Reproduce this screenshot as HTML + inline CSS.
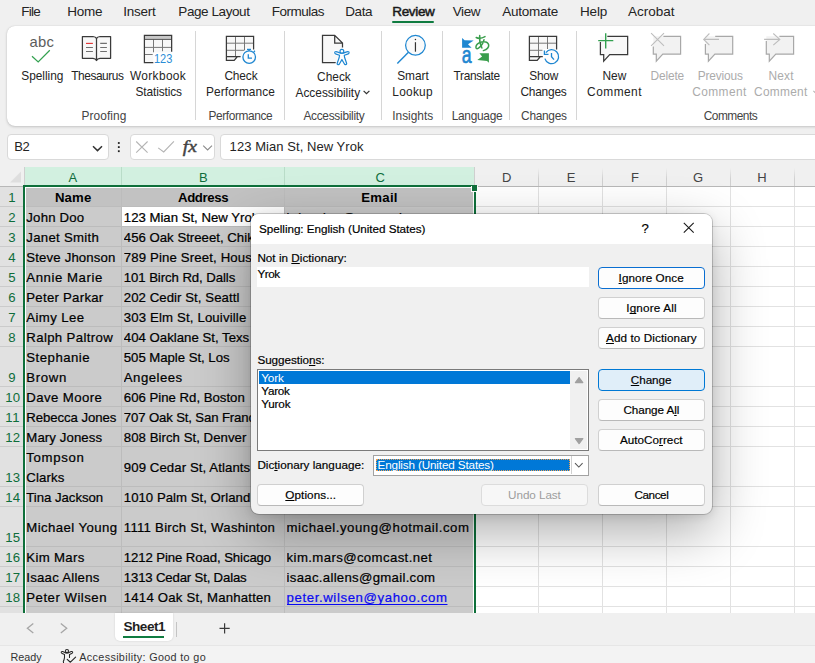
<!DOCTYPE html>
<html><head><meta charset="utf-8"><title>Excel</title>
<style>
*{box-sizing:border-box;margin:0;padding:0}
html,body{width:815px;height:663px;overflow:hidden;background:#f0f0f0;font-family:"Liberation Sans",sans-serif;}
body{position:relative}
.a{position:absolute}
.t{position:absolute;white-space:nowrap;line-height:20px;height:20px}
.t u{text-decoration:underline;text-decoration-thickness:1px;text-underline-offset:1px;text-decoration-skip-ink:none}
svg{position:absolute;overflow:visible}
.sep{position:absolute;width:1px;top:31px;height:89px;background:#d6d6d6}
.btn{position:absolute;height:22px;border:1px solid #d0d0d0;border-bottom-color:#b9b9b9;border-radius:4px;background:#fdfdfd}
</style></head><body>
<!-- tab bar -->
<div class="a" style="left:0;top:0;width:815px;height:26px;background:#f0f0f0"></div>
<div class="a" style="left:392px;top:20.5px;width:42px;height:2.5px;background:#107c41;border-radius:1px"></div>
<!-- ribbon -->
<div class="a" style="left:7px;top:26px;width:830px;height:99.6px;background:#fff;border-radius:8px;box-shadow:0 1px 3px rgba(0,0,0,.18),0 0 1px rgba(0,0,0,.18)"></div>
<div class="sep" style="left:195px"></div><div class="sep" style="left:284px"></div><div class="sep" style="left:381px"></div>
<div class="sep" style="left:442px"></div><div class="sep" style="left:509px"></div><div class="sep" style="left:576px"></div>
<!--ICONS-->
<svg style="left:0;top:0" width="815" height="130" viewBox="0 0 815 130">
<!-- spelling check -->
<path d="M32 56.2L38.2 62L49.8 50.3" stroke="#33a150" stroke-width="1.25" fill="none"/>
<!-- thesaurus -->
<path d="M82.4 36.5H93Q95.6 36.7 96.5 38.6Q97.4 36.7 100 36.5H110.6V58.3H100Q97.4 58.5 96.5 60.5Q95.6 58.5 93 58.3H82.4Z" stroke="#3a3a3a" stroke-width="1.25" fill="#f8f8f8" stroke-linejoin="round"/>
<path d="M96.5 38.4V60.4" stroke="#3a3a3a" stroke-width="1.25"/>
<path d="M86 43.4H92.9" stroke="#e23a3a" stroke-width="1.15"/>
<path d="M86 47.5H92.9M86 51.5H92.9M100.2 43.4H106.9M100.2 47.5H106.9M100.2 51.5H106.9" stroke="#707070" stroke-width="1.15"/>
<!-- workbook stats -->
<rect x="144.4" y="35.4" width="27.2" height="27" fill="#f8f8f8"/>
<rect x="144.4" y="35.4" width="27.2" height="3.9" fill="#c8c8c8"/>
<path d="M153.5 39.3V52.5M162.5 39.3V51.2M145 47.4H171M145 54.5H152.7" stroke="#787878" stroke-width="1" fill="none"/>
<path d="M145 39.4H171" stroke="#555" stroke-width="1" fill="none"/>
<path d="M171.65 51.7V35.4H144.4V62.5H154.3" stroke="#3a3a3a" stroke-width="1.25" fill="none"/>
<rect x="153.3" y="52.4" width="20" height="11.5" fill="#fff"/>
<text x="153.9" y="62.8" font-family="Liberation Sans, sans-serif" font-size="13.4" fill="#2b8dd6" textLength="18.4" lengthAdjust="spacingAndGlyphs">123</text>
<!-- check performance -->
<path d="M226.4 36.4H253.6V56.5H237.4L234.20000000000002 60.3H226.4Z" fill="#f8f8f8"/>
<path d="M235.5 37V56M244.5 37V50M227.0 43.2H253.0M227.0 50.3H244.6" stroke="#787878" stroke-width="1" fill="none"/>
<path d="M253.6 49.5V36.4H226.4V60.3H234.20000000000002L237.4 56.5M226.4 56.5H240.6" stroke="#3a3a3a" stroke-width="1.25" fill="none"/>
<circle cx="249.2" cy="57.1" r="8" fill="#fff"/>
<rect x="245.8" y="47.6" width="6.6" height="4" fill="#fff"/>
<circle cx="249.2" cy="57.1" r="6.3" fill="#fdfdfd" stroke="#1f87d1" stroke-width="1.3"/>
<path d="M247 49.3H251M249 49.3V51M253.7 51.9L255 50.8M248.3 54.2V58.2H252" stroke="#1f87d1" stroke-width="1.3" fill="none"/>
<!-- check accessibility -->
<path d="M322.5 35.4H334.7L342.5 43V62.5H322.5Z" fill="#f8f8f8"/>
<path d="M342.5 47.6V43L334.7 35.4H322.5V62.5H335.8M334.7 35.4V43H342.5" stroke="#3a3a3a" stroke-width="1.25" fill="none"/>
<path d="M336 51.6Q337.5 52 340.4 53.1L343.4 53.1Q346.3 52 347.8 51.6Q349.3 51.6 349 53Q348.7 53.9 347.6 54.1L344.3 55.3L344.6 57.5L346.6 63.2Q346.9 64.4 345.7 64.6Q344.7 64.8 344.3 63.8L341.9 59.6L339.5 63.8Q339.1 64.8 338.1 64.6Q336.9 64.4 337.2 63.2L339.2 57.5L339.5 55.3L336.2 54.1Q335.1 53.9 334.8 53Q334.5 51.6 336 51.6Z" fill="#fff" stroke="#fff" stroke-width="3"/>
<path d="M336 51.6Q337.5 52 340.4 53.1L343.4 53.1Q346.3 52 347.8 51.6Q349.3 51.6 349 53Q348.7 53.9 347.6 54.1L344.3 55.3L344.6 57.5L346.6 63.2Q346.9 64.4 345.7 64.6Q344.7 64.8 344.3 63.8L341.9 59.6L339.5 63.8Q339.1 64.8 338.1 64.6Q336.9 64.4 337.2 63.2L339.2 57.5L339.5 55.3L336.2 54.1Q335.1 53.9 334.8 53Q334.5 51.6 336 51.6Z" fill="#fff" stroke="#1f87d1" stroke-width="1.2" stroke-linejoin="round"/>
<circle cx="341.9" cy="51.2" r="1.9" fill="#fff" stroke="#1f87d1" stroke-width="1.2"/>
<!-- smart lookup -->
<path d="M408.2 52.6L397.3 63.6" stroke="#1f87d1" stroke-width="1.4"/>
<circle cx="415.45" cy="45.3" r="9.85" fill="#fafafa" stroke="#1f87d1" stroke-width="1.25"/>
<path d="M415.45 42.2V51.7" stroke="#333" stroke-width="1.2"/><circle cx="415.45" cy="39.5" r=".75" fill="#333"/>
<!-- translate -->
<path d="M462.1 38L464.6 40.2L473.7 40.6L468 44.2L471.6 47.8H462.1Z" fill="#1f87d1"/>
<g transform="translate(461.7 62.9) scale(0.72 1)"><text x="0" y="0" font-family="Liberation Sans, sans-serif" font-size="24.5" fill="#1f87d1" stroke="#1f87d1" stroke-width="0.7">a</text></g>
<g stroke="#3a9e4c" stroke-width="1.5" fill="none" stroke-linecap="round">
<path d="M476.2 37.5Q480 39.5 485 36.6"/>
<path d="M479.7 35.5Q479 42 481.9 48"/>
<path d="M484 39.8Q482.5 45.5 478.5 48.2Q476 49.6 475.9 47Q476.2 43.4 481.5 42Q487.8 40.8 488.7 45Q489 48.8 483.4 50.6"/>
</g>
<path d="M488.9 53.2H479.4L482.1 56.6L477.3 60.1L487 60.9L488.9 62.8Z" fill="#3a9e4c"/>
<!-- show changes -->
<path d="M529.4 36.4H556.6V56.5H540.4L537.1999999999999 60.3H529.4Z" fill="#f8f8f8"/>
<path d="M538.5 37V56M547.5 37V49.3M530.0 43.2H556.0M530.0 50.3H542.8" stroke="#787878" stroke-width="1" fill="none"/>
<path d="M556.6 49.5V36.4H529.4V60.3H537.1999999999999L540.4 56.5M529.4 56.5H542.8" stroke="#3a3a3a" stroke-width="1.25" fill="none"/>
<circle cx="551.8" cy="57.4" r="8.2" fill="#fff"/>
<rect x="542.6" y="49" width="6" height="7" fill="#fff"/>
<path d="M545.9 52.6A7 7 0 1 1 544.9 58.6" fill="#fdfdfd" stroke="#1f87d1" stroke-width="1.3"/>
<path d="M544.4 50.4V54.4H548.5" stroke="#1f87d1" stroke-width="1.3" fill="none"/>
<path d="M551.5 53.1V56.7L554 59.7" stroke="#1f87d1" stroke-width="1.3" fill="none"/>
<!-- comments -->
<path d="M600.4 36.4H627.65V54.5H609.6999999999999L603.6999999999999 60.5V54.5H600.4Z" fill="#f8f8f8"/><path d="M607.3 36.4H627.65V54.5H609.6999999999999L603.6999999999999 61.1V54.5H600.4V42.1" stroke="#3a3a3a" stroke-width="1.25" fill="none"/>
<path d="M598.2 40.6H613.3M605.7 33.2V48.4" stroke="#33a150" stroke-width="1.4"/>
<path d="M653.3 36.3H680.5999999999999V54.1H662.8L656.3 60.4V54.1H653.3Z" fill="#f2f2f2"/><path d="M663.4 36.3H680.5999999999999V54.1H662.8L656.3 61.1V54.1H653.3V46.4" stroke="#a8a8a8" stroke-width="1.2" fill="none"/>
<path d="M651.1 33.2L664 45.8M664 33.2L651.1 45.8" stroke="#bdbdbd" stroke-width="1.1"/>
<path d="M705.4 36.3H732.6999999999999V54.1H714.9L708.4 60.4V54.1H705.4Z" fill="#f2f2f2"/><path d="M715.2 36.3H732.6999999999999V54.1H714.9L708.4 61.1V54.1H705.4V44" stroke="#a8a8a8" stroke-width="1.2" fill="none"/>
<path d="M703.9 39.4H719M709.4 33.5L703.7 39.4L709.4 45.2" stroke="#bdbdbd" stroke-width="1.1" fill="none"/>
<path d="M766.3 36.3H793.5999999999999V54.1H775.8L769.3 60.4V54.1H766.3Z" fill="#f2f2f2"/><path d="M779.4 36.3H793.5999999999999V54.1H775.8L769.3 61.1V54.1H766.3V40.9" stroke="#a8a8a8" stroke-width="1.2" fill="none"/>
<path d="M764.1 39.4H779.4M773.3 33.5L779.8 39.4L773.3 45.2" stroke="#bdbdbd" stroke-width="1.1" fill="none"/>
<!-- accessibility chevron -->
<path d="M363.6 90.9L366.5 93.7L369.4 90.9" stroke="#333" stroke-width="1.25" fill="none"/>
<path d="M813.4 90.9L816.3 93.7L819.2 90.9" stroke="#b4b4b4" stroke-width="1.1" fill="none"/>
</svg>
<!--/ICONS-->
<!-- formula bar -->
<div class="a" style="left:7px;top:134px;width:101.5px;height:26px;background:#fff;border:1px solid #d9d9d9;border-radius:4px"></div>
<div class="a" style="left:129.5px;top:134px;width:85px;height:26px;background:#fff;border:1px solid #d9d9d9;border-radius:4px"></div>
<div class="a" style="left:219.5px;top:134px;width:620px;height:26px;background:#fff;border:1px solid #d9d9d9;border-radius:4px"></div>
<!--FBICONS-->
<svg style="left:0;top:130px" width="815" height="35" viewBox="0 130 815 35">
<path d="M93 146.3L97.5 150.6L102 146.3" stroke="#333" stroke-width="1.5" fill="none"/>
<rect x="117.9" y="142.1" width="1.8" height="1.8" fill="#222"/><rect x="117.9" y="146.2" width="1.8" height="1.8" fill="#222"/><rect x="117.9" y="150.3" width="1.8" height="1.8" fill="#222"/>
<path d="M136.2 141.5L147.6 152.6M147.6 141.5L136.2 152.6" stroke="#b4b4b4" stroke-width="1.1" fill="none"/>
<path d="M158.2 147.9L163.7 151.9L173.9 141.4" stroke="#b4b4b4" stroke-width="1.1" fill="none"/>
<text x="182.8" y="152.2" font-family="Liberation Serif, serif" font-style="italic" font-size="17.5" fill="#444" stroke="#444" stroke-width="0.45" textLength="14.2" lengthAdjust="spacingAndGlyphs">fx</text>
<path d="M203.2 145.7L207.6 149.9L212 145.7" stroke="#8a8a8a" stroke-width="1.1" fill="none"/>
</svg>
<!--/FBICONS-->
<!-- grid -->
<div class="a" id="grid" style="left:0;top:167px;width:815px;height:446px;background:#fff"></div>
<div class="a" style="left:0px;top:167px;width:815px;height:19px;background:#f0f0f0;"></div>
<div class="a" style="left:24px;top:167px;width:451px;height:18px;background:#d2f0e0;"></div>
<svg style="left:9px;top:171px" width="13" height="13"><path d="M12 0.5V11.5H1Z" fill="#dedede"/></svg>
<div class="a" style="left:121px;top:167px;width:1px;height:18px;background:#b9dcc8;"></div>
<div class="a" style="left:284px;top:167px;width:1px;height:18px;background:#b9dcc8;"></div>
<div class="a" style="left:24px;top:167px;width:1px;height:18px;background:#cfcfcf;"></div>
<div class="a" style="left:538px;top:168px;width:1px;height:18px;background:linear-gradient(#f0f0f0,#d0d0d0 60%);"></div>
<div class="a" style="left:602px;top:168px;width:1px;height:18px;background:linear-gradient(#f0f0f0,#d0d0d0 60%);"></div>
<div class="a" style="left:666px;top:168px;width:1px;height:18px;background:linear-gradient(#f0f0f0,#d0d0d0 60%);"></div>
<div class="a" style="left:730px;top:168px;width:1px;height:18px;background:linear-gradient(#f0f0f0,#d0d0d0 60%);"></div>
<div class="a" style="left:794px;top:168px;width:1px;height:18px;background:linear-gradient(#f0f0f0,#d0d0d0 60%);"></div>
<div class="a" style="left:474px;top:167px;width:1px;height:18px;background:#cfcfcf;"></div>
<div class="a" style="left:0px;top:186px;width:815px;height:1px;background:#b8b8b8;"></div>
<div class="a" style="left:0px;top:187px;width:23px;height:426px;background:#e1e1e1;"></div>
<div class="a" style="left:0px;top:206px;width:23px;height:1px;background:#cbcbcb;"></div>
<div class="a" style="left:476px;top:206px;width:339px;height:1px;background:#e2e2e2;"></div>
<div class="a" style="left:0px;top:226px;width:23px;height:1px;background:#cbcbcb;"></div>
<div class="a" style="left:476px;top:226px;width:339px;height:1px;background:#e2e2e2;"></div>
<div class="a" style="left:0px;top:246px;width:23px;height:1px;background:#cbcbcb;"></div>
<div class="a" style="left:476px;top:246px;width:339px;height:1px;background:#e2e2e2;"></div>
<div class="a" style="left:0px;top:266px;width:23px;height:1px;background:#cbcbcb;"></div>
<div class="a" style="left:476px;top:266px;width:339px;height:1px;background:#e2e2e2;"></div>
<div class="a" style="left:0px;top:286px;width:23px;height:1px;background:#cbcbcb;"></div>
<div class="a" style="left:476px;top:286px;width:339px;height:1px;background:#e2e2e2;"></div>
<div class="a" style="left:0px;top:306px;width:23px;height:1px;background:#cbcbcb;"></div>
<div class="a" style="left:476px;top:306px;width:339px;height:1px;background:#e2e2e2;"></div>
<div class="a" style="left:0px;top:326px;width:23px;height:1px;background:#cbcbcb;"></div>
<div class="a" style="left:476px;top:326px;width:339px;height:1px;background:#e2e2e2;"></div>
<div class="a" style="left:0px;top:346px;width:23px;height:1px;background:#cbcbcb;"></div>
<div class="a" style="left:476px;top:346px;width:339px;height:1px;background:#e2e2e2;"></div>
<div class="a" style="left:0px;top:386px;width:23px;height:1px;background:#cbcbcb;"></div>
<div class="a" style="left:476px;top:386px;width:339px;height:1px;background:#e2e2e2;"></div>
<div class="a" style="left:0px;top:406px;width:23px;height:1px;background:#cbcbcb;"></div>
<div class="a" style="left:476px;top:406px;width:339px;height:1px;background:#e2e2e2;"></div>
<div class="a" style="left:0px;top:426px;width:23px;height:1px;background:#cbcbcb;"></div>
<div class="a" style="left:476px;top:426px;width:339px;height:1px;background:#e2e2e2;"></div>
<div class="a" style="left:0px;top:446px;width:23px;height:1px;background:#cbcbcb;"></div>
<div class="a" style="left:476px;top:446px;width:339px;height:1px;background:#e2e2e2;"></div>
<div class="a" style="left:0px;top:486px;width:23px;height:1px;background:#cbcbcb;"></div>
<div class="a" style="left:476px;top:486px;width:339px;height:1px;background:#e2e2e2;"></div>
<div class="a" style="left:0px;top:506px;width:23px;height:1px;background:#cbcbcb;"></div>
<div class="a" style="left:476px;top:506px;width:339px;height:1px;background:#e2e2e2;"></div>
<div class="a" style="left:0px;top:546px;width:23px;height:1px;background:#cbcbcb;"></div>
<div class="a" style="left:476px;top:546px;width:339px;height:1px;background:#e2e2e2;"></div>
<div class="a" style="left:0px;top:566px;width:23px;height:1px;background:#cbcbcb;"></div>
<div class="a" style="left:476px;top:566px;width:339px;height:1px;background:#e2e2e2;"></div>
<div class="a" style="left:0px;top:586px;width:23px;height:1px;background:#cbcbcb;"></div>
<div class="a" style="left:476px;top:586px;width:339px;height:1px;background:#e2e2e2;"></div>
<div class="a" style="left:0px;top:606px;width:23px;height:1px;background:#cbcbcb;"></div>
<div class="a" style="left:476px;top:606px;width:339px;height:1px;background:#e2e2e2;"></div>
<div class="a" style="left:538px;top:187px;width:1px;height:426px;background:#e2e2e2;"></div>
<div class="a" style="left:602px;top:187px;width:1px;height:426px;background:#e2e2e2;"></div>
<div class="a" style="left:666px;top:187px;width:1px;height:426px;background:#e2e2e2;"></div>
<div class="a" style="left:730px;top:187px;width:1px;height:426px;background:#e2e2e2;"></div>
<div class="a" style="left:794px;top:187px;width:1px;height:426px;background:#e2e2e2;"></div>
<div class="a" style="left:26px;top:188px;width:447px;height:425px;background:#cbcbcb;"></div>
<div class="a" style="left:26px;top:188px;width:447px;height:18px;background:#c2c2c2;"></div>
<div class="a" style="left:26px;top:206px;width:447px;height:1px;background:#bcbcbc;"></div>
<div class="a" style="left:26px;top:226px;width:447px;height:1px;background:#bcbcbc;"></div>
<div class="a" style="left:26px;top:246px;width:447px;height:1px;background:#bcbcbc;"></div>
<div class="a" style="left:26px;top:266px;width:447px;height:1px;background:#bcbcbc;"></div>
<div class="a" style="left:26px;top:286px;width:447px;height:1px;background:#bcbcbc;"></div>
<div class="a" style="left:26px;top:306px;width:447px;height:1px;background:#bcbcbc;"></div>
<div class="a" style="left:26px;top:326px;width:447px;height:1px;background:#bcbcbc;"></div>
<div class="a" style="left:26px;top:346px;width:447px;height:1px;background:#bcbcbc;"></div>
<div class="a" style="left:26px;top:386px;width:447px;height:1px;background:#bcbcbc;"></div>
<div class="a" style="left:26px;top:406px;width:447px;height:1px;background:#bcbcbc;"></div>
<div class="a" style="left:26px;top:426px;width:447px;height:1px;background:#bcbcbc;"></div>
<div class="a" style="left:26px;top:446px;width:447px;height:1px;background:#bcbcbc;"></div>
<div class="a" style="left:26px;top:486px;width:447px;height:1px;background:#bcbcbc;"></div>
<div class="a" style="left:26px;top:506px;width:447px;height:1px;background:#bcbcbc;"></div>
<div class="a" style="left:26px;top:546px;width:447px;height:1px;background:#bcbcbc;"></div>
<div class="a" style="left:26px;top:566px;width:447px;height:1px;background:#bcbcbc;"></div>
<div class="a" style="left:26px;top:586px;width:447px;height:1px;background:#bcbcbc;"></div>
<div class="a" style="left:26px;top:606px;width:447px;height:1px;background:#bcbcbc;"></div>
<div class="a" style="left:121px;top:188px;width:1px;height:425px;background:#bcbcbc;"></div>
<div class="a" style="left:284px;top:188px;width:1px;height:425px;background:#bcbcbc;"></div>
<div class="a" style="left:122px;top:207px;width:162px;height:19px;background:#fff;"></div>
<div class="a" style="left:23px;top:185px;width:453px;height:2px;background:#0f703b;"></div>
<div class="a" style="left:23px;top:185px;width:2px;height:428px;background:#0f703b;"></div>
<div class="a" style="left:474px;top:185px;width:2px;height:428px;background:#0f703b;"></div>
<div class="a" style="left:25px;top:187px;width:448px;height:1px;background:#fff;"></div>
<div class="a" style="left:25px;top:187px;width:1px;height:426px;background:#fff;"></div>
<div class="a" style="left:473px;top:187px;width:1px;height:426px;background:#fff;"></div>
<div class="a" style="left:471px;top:186px;width:7px;height:6px;background:#fff;"></div>
<div class="a" style="left:472px;top:185px;width:5px;height:6px;background:#0f703b;"></div>
<!-- sheet bar -->
<div class="a" style="left:0;top:613px;width:815px;height:32px;background:#f0f0f0"></div>
<div class="a" style="left:115px;top:613px;width:58.2px;height:27.8px;background:#fff;border-radius:0 0 5px 5px;box-shadow:0 0 2px rgba(0,0,0,.15)"></div>
<div class="a" style="left:123.4px;top:636px;width:41px;height:2px;background:#107c41"></div>
<div class="a" style="left:176px;top:621.5px;width:1px;height:15.5px;background:#c4c4c4"></div>

<!-- status bar -->
<div class="a" style="left:0;top:645px;width:815px;height:18px;background:#f3f3f3;border-top:1px solid #e6e6e6"></div>
<!--SHEETICONS-->
<svg style="left:0;top:613px" width="815" height="50" viewBox="0 613 815 50">
<path d="M33.3 623.6L27.4 628.3L33.3 633" stroke="#a6a6a6" stroke-width="1.3" fill="none"/>
<path d="M60.8 623.6L66.7 628.3L60.8 633" stroke="#a6a6a6" stroke-width="1.3" fill="none"/>
<path d="M219.5 628.3H229.7M224.6 623.2V633.4" stroke="#3a3a3a" stroke-width="1.2" fill="none"/>
<g stroke="#262626" stroke-width="1.05" fill="none" stroke-linejoin="round" stroke-linecap="round">
<circle cx="66.95" cy="651" r="1.6"/>
<path d="M65.6 652.8L62.6 651.5Q61.3 651.3 61.2 652.3Q61.2 653.2 62.2 653.5L64.5 654.5V657.6Q64.3 659.5 63.3 661.5L63.6 663"/>
<path d="M68.3 652.8L71.3 651.5Q72.6 651.3 72.7 652.3Q72.7 653.2 71.7 653.5L69.5 654.5V657.4"/>
<path d="M65.6 652.8Q66.95 653.6 68.3 652.8"/>
<path d="M67.2 659.4L70.4 662.2L75.6 657.1" stroke-width="1.15"/>
</g>
</svg>
<!--/SHEETICONS-->
<span class="t" style="left:21.3px;top:1.52px;font-size:13.5px;color:#242424;letter-spacing:-0.741px;">File</span>
<span class="t" style="left:67.3px;top:1.52px;font-size:13.5px;color:#242424;letter-spacing:-0.304px;">Home</span>
<span class="t" style="left:123.3px;top:1.52px;font-size:13.5px;color:#242424;letter-spacing:-0.261px;">Insert</span>
<span class="t" style="left:178.3px;top:1.52px;font-size:13.5px;color:#242424;letter-spacing:-0.419px;">Page Layout</span>
<span class="t" style="left:271.7px;top:1.52px;font-size:13.5px;color:#242424;letter-spacing:-0.483px;">Formulas</span>
<span class="t" style="left:345.3px;top:1.52px;font-size:13.5px;color:#242424;letter-spacing:-0.433px;">Data</span>
<span class="t" style="left:392.3px;top:1.52px;font-size:13.5px;color:#1a1a1a;letter-spacing:-0.344px;-webkit-text-stroke:0.5px #1a1a1a;">Review</span>
<span class="t" style="left:452.7px;top:1.52px;font-size:13.5px;color:#242424;letter-spacing:-0.408px;">View</span>
<span class="t" style="left:502.3px;top:1.52px;font-size:13.5px;color:#242424;letter-spacing:-0.250px;">Automate</span>
<span class="t" style="left:580.0px;top:1.52px;font-size:13.5px;color:#242424;letter-spacing:-0.166px;">Help</span>
<span class="t" style="left:628.0px;top:1.52px;font-size:13.5px;color:#242424;letter-spacing:-0.004px;">Acrobat</span>
<span class="t" style="left:21.3px;top:65.88px;font-size:11.9px;color:#242424;letter-spacing:-0.027px;">Spelling</span>
<span class="t" style="left:71.2px;top:65.88px;font-size:11.9px;color:#242424;letter-spacing:-0.432px;">Thesaurus</span>
<span class="t" style="left:130.0px;top:65.88px;font-size:11.9px;color:#242424;letter-spacing:0.348px;">Workbook</span>
<span class="t" style="left:135.5px;top:81.88px;font-size:11.9px;color:#242424;letter-spacing:-0.118px;">Statistics</span>
<span class="t" style="left:81.5px;top:105.78px;font-size:11.9px;color:#444;letter-spacing:0.075px;">Proofing</span>
<span class="t" style="left:224.4px;top:65.88px;font-size:11.9px;color:#242424;letter-spacing:-0.124px;">Check</span>
<span class="t" style="left:206.0px;top:81.88px;font-size:11.9px;color:#242424;letter-spacing:0.084px;">Performance</span>
<span class="t" style="left:208.4px;top:105.78px;font-size:11.9px;color:#444;letter-spacing:-0.380px;">Performance</span>
<span class="t" style="left:317.1px;top:66.78px;font-size:11.9px;color:#242424;">Check</span>
<span class="t" style="left:295.5px;top:82.78px;font-size:11.9px;color:#242424;letter-spacing:-0.013px;">Accessibility</span>
<span class="t" style="left:303.4px;top:105.78px;font-size:11.9px;color:#444;letter-spacing:-0.282px;">Accessibility</span>
<span class="t" style="left:397.2px;top:65.88px;font-size:11.9px;color:#242424;letter-spacing:-0.044px;">Smart</span>
<span class="t" style="left:392.3px;top:81.88px;font-size:11.9px;color:#242424;letter-spacing:0.247px;">Lookup</span>
<span class="t" style="left:392.3px;top:105.78px;font-size:11.9px;color:#444;letter-spacing:-0.023px;">Insights</span>
<span class="t" style="left:453.6px;top:65.88px;font-size:11.9px;color:#242424;letter-spacing:-0.325px;">Translate</span>
<span class="t" style="left:451.7px;top:105.78px;font-size:11.9px;color:#444;letter-spacing:-0.288px;">Language</span>
<span class="t" style="left:529.2px;top:65.88px;font-size:11.9px;color:#242424;letter-spacing:-0.237px;">Show</span>
<span class="t" style="left:520.4px;top:81.88px;font-size:11.9px;color:#242424;letter-spacing:-0.201px;">Changes</span>
<span class="t" style="left:521.1px;top:105.78px;font-size:11.9px;color:#444;letter-spacing:-0.301px;">Changes</span>
<span class="t" style="left:602.5px;top:65.78px;font-size:11.9px;color:#242424;letter-spacing:0.034px;">New</span>
<span class="t" style="left:587.1px;top:81.88px;font-size:11.9px;color:#242424;letter-spacing:0.479px;">Comment</span>
<span class="t" style="left:650.6px;top:65.78px;font-size:11.9px;color:#ababab;letter-spacing:-0.146px;">Delete</span>
<span class="t" style="left:697.7px;top:65.78px;font-size:11.9px;color:#ababab;letter-spacing:-0.158px;">Previous</span>
<span class="t" style="left:692.3px;top:81.88px;font-size:11.9px;color:#ababab;letter-spacing:0.393px;">Comment</span>
<span class="t" style="left:768.4px;top:65.78px;font-size:11.9px;color:#ababab;letter-spacing:0.237px;">Next</span>
<span class="t" style="left:754.0px;top:81.88px;font-size:11.9px;color:#ababab;letter-spacing:0.293px;">Comment</span>
<span class="t" style="left:703.8px;top:105.78px;font-size:11.9px;color:#444;letter-spacing:-0.512px;">Comments</span>
<span class="t" style="left:29.4px;top:31.57px;font-size:14.8px;color:#5c5c5c;letter-spacing:0.280px;">abc</span>
<span class="t" style="left:14.2px;top:137.10px;font-size:13px;color:#242424;letter-spacing:-0.353px;">B2</span>
<span class="t" style="left:229.6px;top:136.80px;font-size:13px;color:#242424;letter-spacing:0.061px;">123 Mian St, New Yrok</span>
<span class="t" style="left:68.5px;top:167.50px;font-size:13px;color:#0e6d3b;letter-spacing:0.328px;">A</span>
<span class="t" style="left:199.0px;top:167.50px;font-size:13px;color:#0e6d3b;letter-spacing:-0.672px;">B</span>
<span class="t" style="left:375.4px;top:167.50px;font-size:13px;color:#0e6d3b;letter-spacing:-0.891px;">C</span>
<span class="t" style="left:502.1px;top:167.50px;font-size:13px;color:#444;letter-spacing:-0.391px;">D</span>
<span class="t" style="left:566.7px;top:167.50px;font-size:13px;color:#444;letter-spacing:-1.200px;">E</span>
<span class="t" style="left:631.0px;top:167.50px;font-size:13px;color:#444;letter-spacing:-1.200px;">F</span>
<span class="t" style="left:693.0px;top:167.50px;font-size:13px;color:#444;letter-spacing:-0.625px;">G</span>
<span class="t" style="left:757.3px;top:167.50px;font-size:13px;color:#444;letter-spacing:-0.391px;">H</span>
<span class="t" style="left:8.3px;top:187.93px;font-size:13.2px;color:#0e6d3b;letter-spacing:-0.344px;">1</span>
<span class="t" style="left:8.3px;top:207.93px;font-size:13.2px;color:#0e6d3b;letter-spacing:-0.344px;">2</span>
<span class="t" style="left:8.3px;top:227.93px;font-size:13.2px;color:#0e6d3b;letter-spacing:-0.344px;">3</span>
<span class="t" style="left:8.3px;top:247.93px;font-size:13.2px;color:#0e6d3b;letter-spacing:-0.344px;">4</span>
<span class="t" style="left:8.3px;top:267.93px;font-size:13.2px;color:#0e6d3b;letter-spacing:-0.344px;">5</span>
<span class="t" style="left:8.3px;top:287.93px;font-size:13.2px;color:#0e6d3b;letter-spacing:-0.344px;">6</span>
<span class="t" style="left:8.3px;top:307.93px;font-size:13.2px;color:#0e6d3b;letter-spacing:-0.344px;">7</span>
<span class="t" style="left:8.3px;top:327.93px;font-size:13.2px;color:#0e6d3b;letter-spacing:-0.344px;">8</span>
<span class="t" style="left:8.3px;top:367.93px;font-size:13.2px;color:#0e6d3b;letter-spacing:-0.344px;">9</span>
<span class="t" style="left:5.2px;top:387.93px;font-size:13.2px;color:#0e6d3b;letter-spacing:0.164px;">10</span>
<span class="t" style="left:5.2px;top:407.93px;font-size:13.2px;color:#0e6d3b;letter-spacing:0.648px;">11</span>
<span class="t" style="left:5.2px;top:427.93px;font-size:13.2px;color:#0e6d3b;letter-spacing:0.164px;">12</span>
<span class="t" style="left:5.2px;top:467.93px;font-size:13.2px;color:#0e6d3b;letter-spacing:0.164px;">13</span>
<span class="t" style="left:5.2px;top:487.93px;font-size:13.2px;color:#0e6d3b;letter-spacing:0.164px;">14</span>
<span class="t" style="left:5.2px;top:527.93px;font-size:13.2px;color:#0e6d3b;letter-spacing:0.164px;">15</span>
<span class="t" style="left:5.2px;top:547.93px;font-size:13.2px;color:#0e6d3b;letter-spacing:0.164px;">16</span>
<span class="t" style="left:5.2px;top:567.93px;font-size:13.2px;color:#0e6d3b;letter-spacing:0.164px;">17</span>
<span class="t" style="left:5.2px;top:587.93px;font-size:13.2px;color:#0e6d3b;letter-spacing:0.164px;">18</span>
<span class="t" style="left:54.9px;top:187.63px;font-size:13.2px;color:#000;font-weight:700;letter-spacing:0.145px;">Name</span>
<span class="t" style="left:178.0px;top:187.63px;font-size:13.2px;color:#000;font-weight:700;letter-spacing:-0.369px;">Address</span>
<span class="t" style="left:361.3px;top:187.63px;font-size:13.2px;color:#000;font-weight:700;letter-spacing:0.262px;">Email</span>
<span class="t" style="left:26.3px;top:207.73px;font-size:13.2px;color:#000;letter-spacing:0.206px;-webkit-text-stroke:0.22px currentColor;width:94.7px;overflow:hidden;">John Doo</span>
<span class="t" style="left:123.8px;top:207.73px;font-size:13.2px;color:#000;letter-spacing:-0.006px;-webkit-text-stroke:0.22px currentColor;width:160.2px;overflow:hidden;">123 Mian St, New Yrok</span>
<span class="t" style="left:286.6px;top:207.73px;font-size:13.2px;color:#000;letter-spacing:0.639px;-webkit-text-stroke:0.22px currentColor;width:186.4px;overflow:hidden;">john.doo@example.com</span>
<span class="t" style="left:26.3px;top:227.73px;font-size:13.2px;color:#000;letter-spacing:0.278px;-webkit-text-stroke:0.22px currentColor;width:94.7px;overflow:hidden;">Janet Smith</span>
<span class="t" style="left:123.8px;top:227.73px;font-size:13.2px;color:#000;letter-spacing:0.010px;-webkit-text-stroke:0.22px currentColor;width:160.2px;overflow:hidden;">456 Oak Streeet, Chikago</span>
<span class="t" style="left:26.3px;top:247.73px;font-size:13.2px;color:#000;letter-spacing:0.158px;-webkit-text-stroke:0.22px currentColor;width:94.7px;overflow:hidden;">Steve Jhonson</span>
<span class="t" style="left:123.8px;top:247.73px;font-size:13.2px;color:#000;letter-spacing:0.143px;-webkit-text-stroke:0.22px currentColor;width:160.2px;overflow:hidden;">789 Pine Sreet, Houston</span>
<span class="t" style="left:26.3px;top:267.73px;font-size:13.2px;color:#000;letter-spacing:0.557px;-webkit-text-stroke:0.22px currentColor;width:94.7px;overflow:hidden;">Annie Marie</span>
<span class="t" style="left:123.8px;top:267.73px;font-size:13.2px;color:#000;letter-spacing:-0.078px;-webkit-text-stroke:0.22px currentColor;width:160.2px;overflow:hidden;">101 Birch Rd, Dalls</span>
<span class="t" style="left:26.3px;top:287.73px;font-size:13.2px;color:#000;letter-spacing:0.264px;-webkit-text-stroke:0.22px currentColor;width:94.7px;overflow:hidden;">Peter Parkar</span>
<span class="t" style="left:123.8px;top:287.73px;font-size:13.2px;color:#000;letter-spacing:0.062px;-webkit-text-stroke:0.22px currentColor;width:160.2px;overflow:hidden;">202 Cedir St, Seattl</span>
<span class="t" style="left:26.3px;top:307.73px;font-size:13.2px;color:#000;letter-spacing:0.389px;-webkit-text-stroke:0.22px currentColor;width:94.7px;overflow:hidden;">Aimy Lee</span>
<span class="t" style="left:123.8px;top:307.73px;font-size:13.2px;color:#000;letter-spacing:0.148px;-webkit-text-stroke:0.22px currentColor;width:160.2px;overflow:hidden;">303 Elm St, Louiville</span>
<span class="t" style="left:26.3px;top:327.73px;font-size:13.2px;color:#000;letter-spacing:0.362px;-webkit-text-stroke:0.22px currentColor;width:94.7px;overflow:hidden;">Ralph Paltrow</span>
<span class="t" style="left:123.8px;top:327.73px;font-size:13.2px;color:#000;letter-spacing:0.014px;-webkit-text-stroke:0.22px currentColor;width:160.2px;overflow:hidden;">404 Oaklane St, Texs</span>
<span class="t" style="left:26.3px;top:347.63px;font-size:13.2px;color:#000;letter-spacing:0.488px;-webkit-text-stroke:0.22px currentColor;width:94.7px;overflow:hidden;">Stephanie</span>
<span class="t" style="left:26.3px;top:367.63px;font-size:13.2px;color:#000;letter-spacing:0.682px;-webkit-text-stroke:0.22px currentColor;width:94.7px;overflow:hidden;">Brown</span>
<span class="t" style="left:123.8px;top:347.63px;font-size:13.2px;color:#000;letter-spacing:-0.036px;-webkit-text-stroke:0.22px currentColor;width:160.2px;overflow:hidden;">505 Maple St, Los</span>
<span class="t" style="left:123.8px;top:367.63px;font-size:13.2px;color:#000;letter-spacing:0.475px;-webkit-text-stroke:0.22px currentColor;width:160.2px;overflow:hidden;">Angelees</span>
<span class="t" style="left:26.3px;top:387.73px;font-size:13.2px;color:#000;letter-spacing:0.406px;-webkit-text-stroke:0.22px currentColor;width:94.7px;overflow:hidden;">Dave Moore</span>
<span class="t" style="left:123.8px;top:387.73px;font-size:13.2px;color:#000;-webkit-text-stroke:0.22px currentColor;width:160.2px;overflow:hidden;">606 Pine Rd, Boston</span>
<span class="t" style="left:26.3px;top:407.73px;font-size:13.2px;color:#000;letter-spacing:-0.070px;-webkit-text-stroke:0.22px currentColor;width:94.7px;overflow:hidden;">Rebecca Jones</span>
<span class="t" style="left:123.8px;top:407.73px;font-size:13.2px;color:#000;letter-spacing:-0.144px;-webkit-text-stroke:0.22px currentColor;width:160.2px;overflow:hidden;">707 Oak St, San Francisko</span>
<span class="t" style="left:26.3px;top:427.73px;font-size:13.2px;color:#000;letter-spacing:0.103px;-webkit-text-stroke:0.22px currentColor;width:94.7px;overflow:hidden;">Mary Joness</span>
<span class="t" style="left:123.8px;top:427.73px;font-size:13.2px;color:#000;letter-spacing:0.046px;-webkit-text-stroke:0.22px currentColor;width:160.2px;overflow:hidden;">808 Birch St, Denver</span>
<span class="t" style="left:26.3px;top:447.63px;font-size:13.2px;color:#000;letter-spacing:0.655px;-webkit-text-stroke:0.22px currentColor;width:94.7px;overflow:hidden;">Tompson</span>
<span class="t" style="left:26.3px;top:467.63px;font-size:13.2px;color:#000;letter-spacing:0.154px;-webkit-text-stroke:0.22px currentColor;width:94.7px;overflow:hidden;">Clarks</span>
<span class="t" style="left:123.8px;top:457.73px;font-size:13.2px;color:#000;letter-spacing:0.089px;-webkit-text-stroke:0.22px currentColor;width:160.2px;overflow:hidden;">909 Cedar St, Atlants</span>
<span class="t" style="left:26.3px;top:487.73px;font-size:13.2px;color:#000;letter-spacing:-0.027px;-webkit-text-stroke:0.22px currentColor;width:94.7px;overflow:hidden;">Tina Jackson</span>
<span class="t" style="left:123.8px;top:487.73px;font-size:13.2px;color:#000;letter-spacing:0.020px;-webkit-text-stroke:0.22px currentColor;width:160.2px;overflow:hidden;">1010 Palm St, Orland</span>
<span class="t" style="left:26.3px;top:517.73px;font-size:13.2px;color:#000;letter-spacing:0.416px;-webkit-text-stroke:0.22px currentColor;width:94.7px;overflow:hidden;">Michael Young</span>
<span class="t" style="left:123.8px;top:517.73px;font-size:13.2px;color:#000;letter-spacing:0.251px;-webkit-text-stroke:0.22px currentColor;width:160.2px;overflow:hidden;">1111 Birch St, Washinton</span>
<span class="t" style="left:286.6px;top:517.73px;font-size:13.2px;color:#000;letter-spacing:0.535px;-webkit-text-stroke:0.22px currentColor;width:186.4px;overflow:hidden;">michael.young@hotmail.com</span>
<span class="t" style="left:26.3px;top:547.73px;font-size:13.2px;color:#000;letter-spacing:0.327px;-webkit-text-stroke:0.22px currentColor;width:94.7px;overflow:hidden;">Kim Mars</span>
<span class="t" style="left:123.8px;top:547.73px;font-size:13.2px;color:#000;letter-spacing:-0.099px;-webkit-text-stroke:0.22px currentColor;width:160.2px;overflow:hidden;">1212 Pine Road, Shicago</span>
<span class="t" style="left:286.6px;top:547.73px;font-size:13.2px;color:#000;letter-spacing:0.382px;-webkit-text-stroke:0.22px currentColor;width:186.4px;overflow:hidden;">kim.mars@comcast.net</span>
<span class="t" style="left:26.3px;top:567.73px;font-size:13.2px;color:#000;letter-spacing:0.244px;-webkit-text-stroke:0.22px currentColor;width:94.7px;overflow:hidden;">Isaac Allens</span>
<span class="t" style="left:123.8px;top:567.73px;font-size:13.2px;color:#000;letter-spacing:-0.170px;-webkit-text-stroke:0.22px currentColor;width:160.2px;overflow:hidden;">1313 Cedar St, Dalas</span>
<span class="t" style="left:286.6px;top:567.73px;font-size:13.2px;color:#000;letter-spacing:0.291px;-webkit-text-stroke:0.22px currentColor;width:186.4px;overflow:hidden;">isaac.allens@gmail.com</span>
<span class="t" style="left:26.3px;top:587.73px;font-size:13.2px;color:#000;letter-spacing:0.495px;-webkit-text-stroke:0.22px currentColor;width:94.7px;overflow:hidden;">Peter Wilsen</span>
<span class="t" style="left:123.8px;top:587.73px;font-size:13.2px;color:#000;letter-spacing:0.197px;-webkit-text-stroke:0.22px currentColor;width:160.2px;overflow:hidden;">1414 Oak St, Manhatten</span>
<span class="t" style="left:286.6px;top:587.73px;font-size:13.2px;color:#0a0af0;letter-spacing:0.607px;text-decoration:underline;text-decoration-thickness:1px;text-underline-offset:1.5px;text-decoration-skip-ink:none;-webkit-text-stroke:0.22px currentColor;width:186.4px;overflow:hidden;">peter.wilsen@yahoo.com</span>
<span class="t" style="left:123.4px;top:616.59px;font-size:13.6px;color:#1f1f1f;font-weight:700;letter-spacing:-0.480px;">Sheet1</span>
<span class="t" style="left:10.6px;top:646.76px;font-size:10.8px;color:#333;letter-spacing:-0.064px;">Ready</span>
<span class="t" style="left:79.3px;top:646.76px;font-size:10.8px;color:#333;letter-spacing:0.339px;">Accessibility: Good to go</span>


<div class="a" style="left:251px;top:214px;width:461px;height:299.5px;background:#f0f0f0;border-radius:8px;box-shadow:0 0 0 1px rgba(0,0,0,.18),0 18px 54px rgba(0,0,0,.33),0 2px 10px rgba(0,0,0,.10);overflow:hidden">
  <div class="a" style="left:0;top:0;width:461px;height:30px;background:#fff"></div>
</div>
<svg style="left:683px;top:222px" width="12" height="12"><path d="M0.8 0.8L10.7 10.7M10.7 0.8L0.8 10.7" stroke="#1a1a1a" stroke-width="1.1" fill="none"/></svg>
<!-- not in dictionary box -->
<div class="a" style="left:257px;top:267px;width:332px;height:20px;background:#fff"></div>
<!-- listbox -->
<div class="a" style="left:257px;top:369px;width:332px;height:82px;background:#fff;border:1px solid #7a7a7a"></div>
<div class="a" style="left:570px;top:371px;width:17px;height:78px;background:#f0f0f0"></div>
<div class="a" style="left:259px;top:371px;width:310.5px;height:13px;background:#0078d7"></div>
<svg style="left:574px;top:376px" width="10" height="8"><path d="M1.4 6.6L5.1 1.6L8.8 6.6Z" fill="#a0a0a0" stroke="#a0a0a0" stroke-width="1.2" stroke-linejoin="round"/></svg>
<svg style="left:574px;top:437px" width="10" height="8"><path d="M1.4 1.6L5.1 6.6L8.8 1.6Z" fill="#a0a0a0" stroke="#a0a0a0" stroke-width="1.2" stroke-linejoin="round"/></svg>
<!-- combo -->
<div class="a" style="left:373px;top:454.5px;width:216px;height:21px;background:#fff;border:1px solid #a2a2a2"></div>
<div class="a" style="left:571px;top:456px;width:1px;height:18px;background:#d0d0d0"></div>
<div class="a" style="left:376px;top:458.5px;width:193.5px;height:12.5px;background:#0078d7;outline:1px dotted #f0a050;outline-offset:-1px"></div>
<svg style="left:574px;top:461px" width="11" height="7"><path d="M1 2.2L4.8 6L8.6 2.2" stroke="#555" stroke-width="1.05" fill="none"/></svg>
<!-- buttons -->
<div class="btn" style="left:598px;top:267px;width:107px;border:1.7px solid #0a6ed1"></div>
<div class="btn" style="left:598px;top:297px;width:107px"></div>
<div class="btn" style="left:598px;top:327px;width:107px"></div>
<div class="btn" style="left:598px;top:369px;width:107px;background:#e0eef9;border-color:#0078d4"></div>
<div class="btn" style="left:598px;top:399px;width:107px"></div>
<div class="btn" style="left:598px;top:429px;width:107px"></div>
<div class="btn" style="left:598px;top:484px;width:107px"></div>
<div class="btn" style="left:481px;top:484px;width:107px;background:#f7f7f7;border-color:#dcdcdc"></div>
<div class="btn" style="left:257px;top:484px;width:107px"></div>

<span class="t" style="left:259.1px;top:219.05px;font-size:11.7px;color:#000;letter-spacing:-0.040px;-webkit-text-stroke:0.18px #000;">Spelling: English (United States)</span>
<span class="t" style="left:257.4px;top:248.45px;font-size:11.7px;color:#000;letter-spacing:0.021px;-webkit-text-stroke:0.18px #000;">Not in <u>D</u>ictionary:</span>
<span class="t" style="left:257.4px;top:264.35px;font-size:11.7px;color:#000;letter-spacing:-0.437px;-webkit-text-stroke:0.18px #000;">Yrok</span>
<span class="t" style="left:257.4px;top:349.95px;font-size:11.7px;color:#000;letter-spacing:-0.049px;-webkit-text-stroke:0.18px #000;">Suggestio<u>n</u>s:</span>
<span class="t" style="left:261.2px;top:367.95px;font-size:11.7px;color:#fff;letter-spacing:-0.117px;">York</span>
<span class="t" style="left:261.2px;top:381.25px;font-size:11.7px;color:#000;letter-spacing:-0.234px;-webkit-text-stroke:0.18px #000;">Yarok</span>
<span class="t" style="left:261.2px;top:394.45px;font-size:11.7px;color:#000;letter-spacing:-0.138px;-webkit-text-stroke:0.18px #000;">Yurok</span>
<span class="t" style="left:257.4px;top:455.35px;font-size:11.7px;color:#000;letter-spacing:0.011px;-webkit-text-stroke:0.18px #000;">Dic<u>t</u>ionary language:</span>
<span class="t" style="left:377.5px;top:455.35px;font-size:11.7px;color:#fff;letter-spacing:-0.140px;">English (United States)</span>
<span class="t" style="left:285.3px;top:484.95px;font-size:11.7px;color:#000;letter-spacing:0.087px;-webkit-text-stroke:0.18px #000;"><u>O</u>ptions...</span>
<span class="t" style="left:508.1px;top:484.95px;font-size:11.7px;color:#9d9d9d;letter-spacing:-0.065px;">Undo Last</span>
<span class="t" style="left:634.5px;top:484.95px;font-size:11.7px;color:#000;letter-spacing:-0.415px;-webkit-text-stroke:0.18px #000;">Cancel</span>
<span class="t" style="left:618.6px;top:267.95px;font-size:11.7px;color:#000;letter-spacing:0.079px;-webkit-text-stroke:0.18px #000;"><u>I</u>gnore Once</span>
<span class="t" style="left:626.2px;top:297.95px;font-size:11.7px;color:#000;letter-spacing:0.175px;-webkit-text-stroke:0.18px #000;">I<u>g</u>nore All</span>
<span class="t" style="left:606.0px;top:327.95px;font-size:11.7px;color:#000;letter-spacing:0.100px;-webkit-text-stroke:0.18px #000;"><u>A</u>dd to Dictionary</span>
<span class="t" style="left:630.8px;top:369.95px;font-size:11.7px;color:#000;letter-spacing:-0.045px;-webkit-text-stroke:0.18px #000;"><u>C</u>hange</span>
<span class="t" style="left:623.5px;top:399.95px;font-size:11.7px;color:#000;letter-spacing:-0.086px;-webkit-text-stroke:0.18px #000;">Change A<u>l</u>l</span>
<span class="t" style="left:620.0px;top:429.95px;font-size:11.7px;color:#000;letter-spacing:0.011px;-webkit-text-stroke:0.18px #000;">AutoCo<u>r</u>rect</span>
<span class="t" style="left:641.6px;top:218.83px;font-size:13.2px;color:#000;letter-spacing:-1.200px;-webkit-text-stroke:0.35px #000;-webkit-text-stroke:0.18px #000;">?</span>

</body></html>
